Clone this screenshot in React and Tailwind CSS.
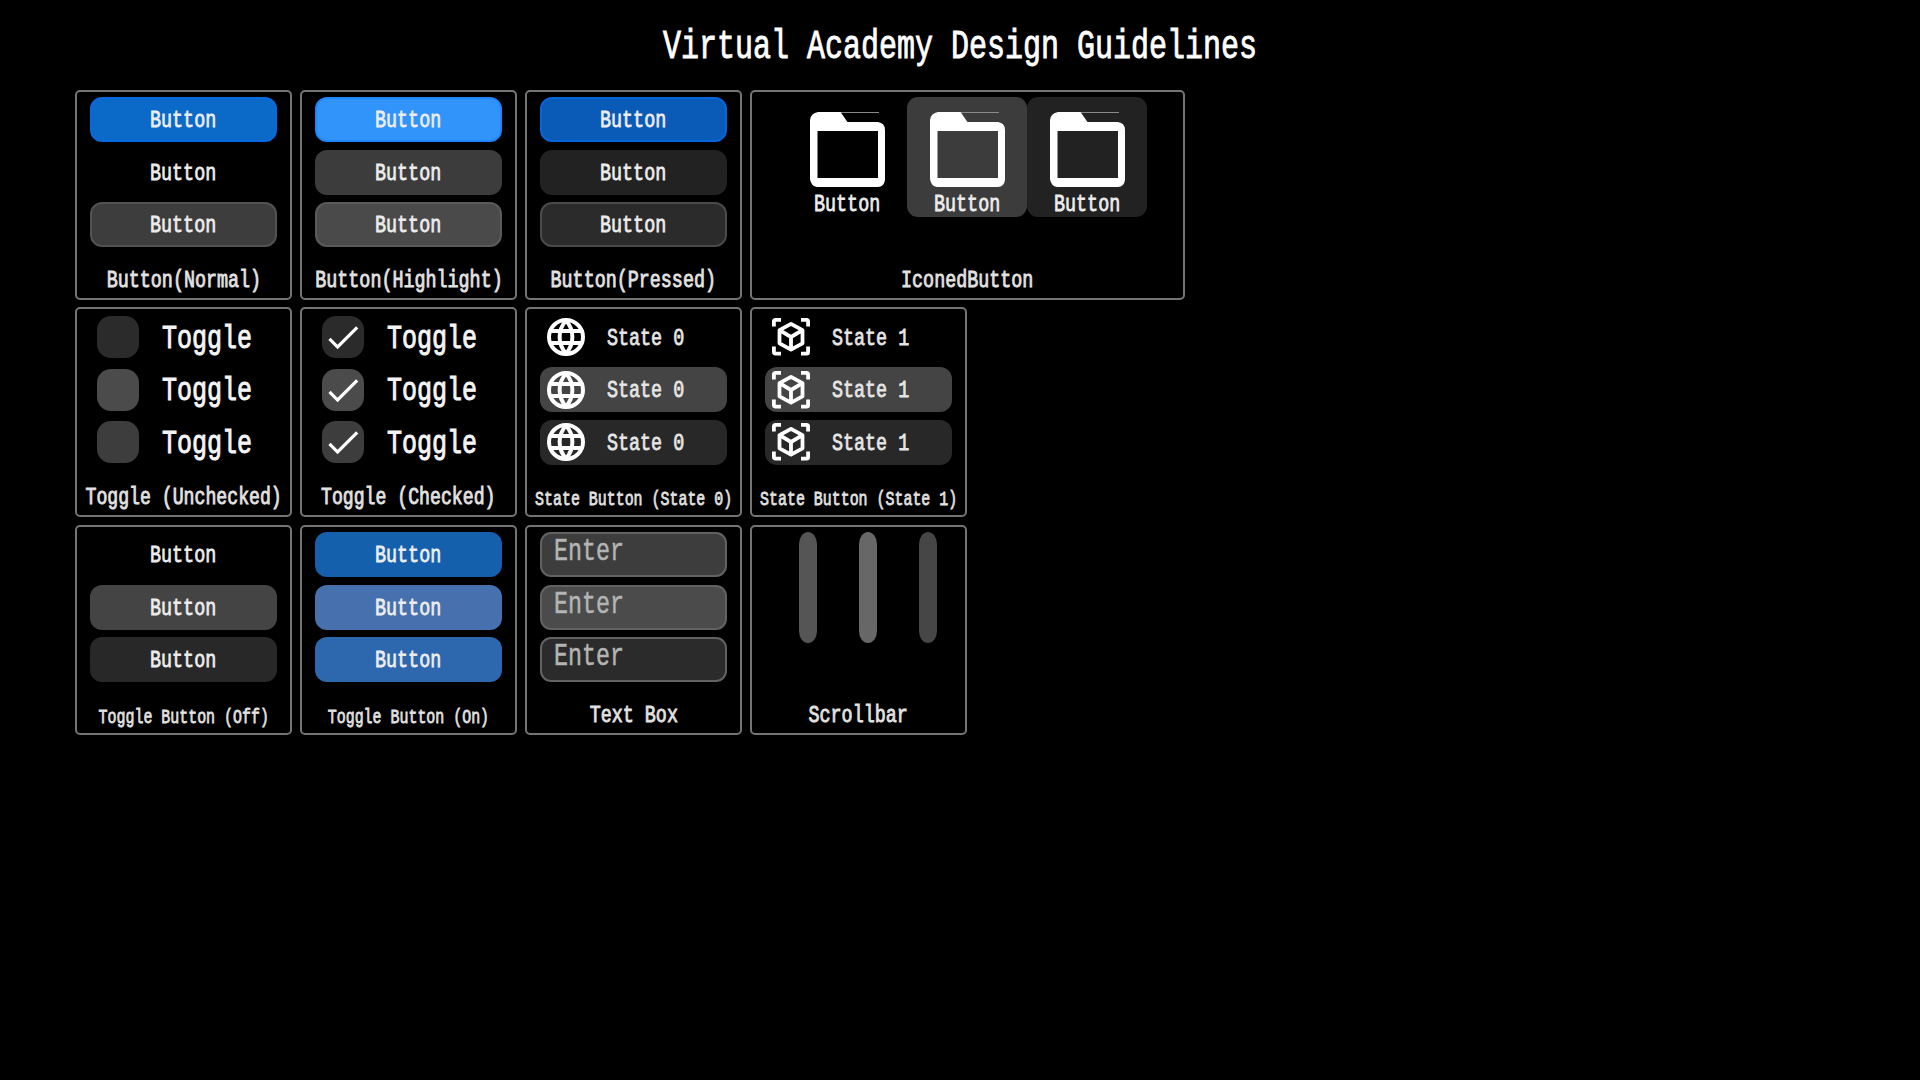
import React from 'react';

const SIZES = {
  title: 'pt-[5px] text-[40px] scale-x-[0.75] text-white [-webkit-text-stroke:0.9px_white]',
  toggle: 'pt-[3px] text-[34px] scale-x-[0.735] text-[#f4f4f4] [-webkit-text-stroke:1px_#f4f4f4]',
  input: 'text-[30.5px] scale-x-[0.765] text-[#b4b4b4] [-webkit-text-stroke:0.5px_#b4b4b4]',
  button: 'pt-[4px] text-[24.5px] scale-x-[0.75] text-[#ededed] [-webkit-text-stroke:0.8px_#ededed]',
  state: 'pt-[4px] text-[24.5px] scale-x-[0.75] text-[#e6e6e6] [-webkit-text-stroke:0.8px_#e6e6e6]',
  caption: 'text-[24.5px] scale-x-[0.75] text-[#e2e2e2] [-webkit-text-stroke:0.9px_#e2e2e2]',
  captionMd: 'text-[24px] scale-x-[0.757] text-[#e2e2e2] [-webkit-text-stroke:0.9px_#e2e2e2]',
  captionSm: 'text-[21px] scale-x-[0.711] text-[#e2e2e2] [-webkit-text-stroke:0.8px_#e2e2e2]',
};

function Label({ size = 'button', left = false, children }) {
  return (
    <span className={`inline-block shrink-0 whitespace-pre leading-none ${left ? 'origin-left' : 'origin-center'} ${SIZES[size]}`}>
      {children}
    </span>
  );
}

function Panel({ caption, size = 'caption', top = 'pt-[5px]', wide = false, children }) {
  return (
    <section className={`flex h-[210px] flex-col items-center rounded-[5px] border-2 border-[#747474] ${top} ${wide ? 'w-[435px]' : 'w-[217px]'}`}>
      {children}
      <div className="mt-auto flex justify-center pb-[5px]">
        <Label size={size}>{caption}</Label>
      </div>
    </section>
  );
}

function Stack({ children }) {
  return <div className="flex w-[187px] flex-col gap-[7.5px]">{children}</div>;
}

function Button({ look }) {
  return (
    <button className={`flex h-[45px] w-full items-center justify-center rounded-[12px] ${look}`}>
      <Label>Button</Label>
    </button>
  );
}

function ButtonStack({ looks }) {
  return (
    <Stack>
      {looks.map((look, i) => <Button key={i} look={look} />)}
    </Stack>
  );
}

function FolderIcon() {
  return (
    <svg className="h-[75px] w-[75px] shrink-0" viewBox="0 0 75 75">
      <path d="M30 .5h39" stroke="#8a8a8a" strokeWidth="1" />
      <path
        fill="#fff"
        fillRule="evenodd"
        d="M8 0H30.500L37.500 10H68Q75 11 75 18V68Q74 75 68 75H7Q1 74 0 67V8Q1 1 8 0ZM7.500 19V66H68V19Z"
      />
    </svg>
  );
}

function IconedButton({ look }) {
  return (
    <button className={`flex h-[120px] w-[120px] flex-col items-center justify-start rounded-[11px] pt-[15px] ${look}`}>
      <FolderIcon />
      <span className="mt-[2px] flex justify-center"><Label>Button</Label></span>
    </button>
  );
}

function Toggle({ look, checked }) {
  return (
    <div className="flex h-[45px] items-center pl-[7px]">
      <span className={`flex h-[42px] w-[42px] shrink-0 items-center justify-center rounded-[14px] ${look}`}>
        {checked && (
          <svg className="h-[42px] w-[42px]" viewBox="0 0 42 42" fill="none" stroke="#fff" strokeWidth="3.2">
            <path d="M7.500 22.800 15.600 31 35.200 11.400" />
          </svg>
        )}
      </span>
      <span className="ml-[23px] flex"><Label size="toggle" left>Toggle</Label></span>
    </div>
  );
}

function GlobeIcon() {
  return (
    <svg className="h-[38px] w-[38px] shrink-0" viewBox="0 0 38 38" fill="none" stroke="#fff" strokeWidth="4">
      <circle cx="19" cy="19" r="17" />
      <path d="M19 2.500C10.500 12 10.500 26 19 35.500C27.500 26 27.500 12 19 2.500ZM4 13H34M4 25H34" />
    </svg>
  );
}

function CubeIcon() {
  return (
    <svg className="h-[38px] w-[38px] shrink-0" viewBox="0 0 38 38" fill="none" stroke="#fff" strokeWidth="3.8">
      <path d="M1.900 8.500V3.500Q1.900 1.900 3.500 1.900H9M29 1.900H34.500Q36.100 1.900 36.100 3.500V8.500M36.100 28.500V34Q36.100 35.600 34.500 35.600H29M9 35.600H3.500Q1.900 35.600 1.900 34V28.500" />
      <path strokeLinejoin="round" d="M19 5.800 30.500 12.200V25.300L19 31.700 7.500 25.300V12.200ZM7.500 12.200 19 19 30.500 12.200M19 19V31.500" />
    </svg>
  );
}

function StateButton({ look, icon, text }) {
  return (
    <button className={`flex h-[45px] w-full items-center rounded-[12px] pl-[7px] ${look}`}>
      {icon}
      <span className="ml-[22px] flex"><Label size="state" left>{text}</Label></span>
    </button>
  );
}

function TextBox({ look }) {
  return (
    <div className={`flex h-[45px] w-full items-start rounded-[11px] border-2 border-[#626262] pl-[12px] pt-[3px] ${look}`}>
      <Label size="input" left>Enter</Label>
    </div>
  );
}

const NORMAL = [
  'bg-[#0b69c7] border-2 border-[#056ae0]',
  '',
  'bg-[#3d3d3d] border-2 border-[#525252]',
];
const HIGHLIGHT = [
  'bg-[#3094fb] border-2 border-[#1e86fb]',
  'bg-[#3c3c3c]',
  'bg-[#4a4a4a] border-2 border-[#5a5a5a]',
];
const PRESSED = [
  'bg-[#0a5ab7] border-2 border-[#0566dc]',
  'bg-[#222222]',
  'bg-[#2b2b2b] border-2 border-[#4a4a4a]',
];
const TOGGLES = ['bg-[#2b2b2b]', 'bg-[#4b4b4b]', 'bg-[#3d3d3d]'];
const STATES = ['', 'bg-[#444444]', 'bg-[#282828]'];
const TOGGLED = ['bg-[#1460ac]', 'bg-[#4770ae]', 'bg-[#2d67ae]'];
const INPUTS = ['bg-[#3d3d3d]', 'bg-[#4b4b4b]', 'bg-[#2b2b2b]'];
const BARS = ['bg-[#555555]', 'bg-[#676767]', 'bg-[#464646]'];

export default function App() {
  return (
    <main className="h-[1080px] w-[1920px] overflow-hidden bg-black font-['Liberation_Mono',monospace]">
      <h1 className="flex h-[90px] items-center justify-center"><Label size="title">Virtual Academy Design Guidelines</Label></h1>
      <div className="flex flex-col gap-[7px] pl-[75px]">
        <div className="flex gap-2">
          <Panel caption="Button(Normal)"><ButtonStack looks={NORMAL} /></Panel>
          <Panel caption="Button(Highlight)"><ButtonStack looks={HIGHLIGHT} /></Panel>
          <Panel caption="Button(Pressed)"><ButtonStack looks={PRESSED} /></Panel>
          <Panel caption="IconedButton" wide>
            <div className="flex pr-px">
              <IconedButton look="" />
              <IconedButton look="bg-[#3c3c3c]" />
              <IconedButton look="bg-[#222222]" />
            </div>
          </Panel>
        </div>
        <div className="flex gap-2">
          <Panel caption="Toggle (Unchecked)" size="captionMd" top="pt-[5.5px]">
            <Stack>{TOGGLES.map((look) => <Toggle key={look} look={look} />)}</Stack>
          </Panel>
          <Panel caption="Toggle (Checked)" size="captionMd" top="pt-[5.5px]">
            <Stack>{TOGGLES.map((look) => <Toggle key={look} look={look} checked />)}</Stack>
          </Panel>
          <Panel caption="State Button (State 0)" size="captionSm" top="pt-[5.5px]">
            <Stack>{STATES.map((look) => <StateButton key={look} look={look} icon={<GlobeIcon />} text="State 0" />)}</Stack>
          </Panel>
          <Panel caption="State Button (State 1)" size="captionSm" top="pt-[5.5px]">
            <Stack>{STATES.map((look) => <StateButton key={look} look={look} icon={<CubeIcon />} text="State 1" />)}</Stack>
          </Panel>
        </div>
        <div className="mt-px flex gap-2">
          <Panel caption="Toggle Button (Off)" size="captionSm"><ButtonStack looks={STATES} /></Panel>
          <Panel caption="Toggle Button (On)" size="captionSm"><ButtonStack looks={TOGGLED} /></Panel>
          <Panel caption="Text Box">
            <Stack>{INPUTS.map((look) => <TextBox key={look} look={look} />)}</Stack>
          </Panel>
          <Panel caption="Scrollbar">
            <div className="flex gap-[42px] pl-[18px]">
              {BARS.map((look) => <div key={look} className={`h-[111px] w-[18px] rounded-[9px/12px] ${look}`} />)}
            </div>
          </Panel>
        </div>
      </div>
    </main>
  );
}
